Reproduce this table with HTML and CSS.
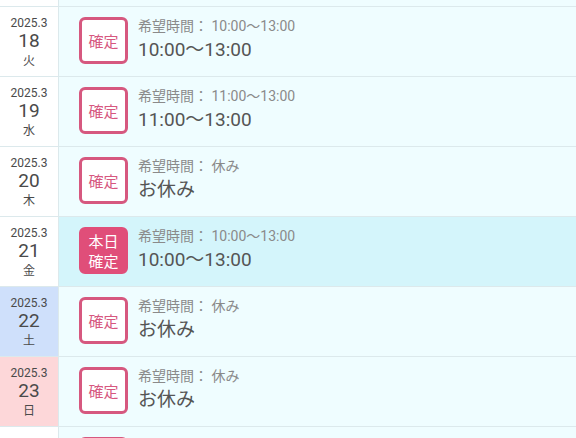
FILE: index.html
```html
<!DOCTYPE html>
<html lang="ja">
<head>
<meta charset="utf-8">
<link rel="stylesheet" href="styles.css">
</head>
<body>
<div class="list">
  <div class="row">
    <div class="date"><div class="ym">2025.3</div><div class="d">17</div><div class="w">月</div></div>
    <div class="main"><div class="badge">確定</div><div class="info"><div class="label">希望時間： 10:00〜13:00</div><div class="time">10:00〜13:00</div></div></div>
  </div>
  <div class="row">
    <div class="date"><div class="ym">2025.3</div><div class="d">18</div><div class="w">火</div></div>
    <div class="main"><div class="badge">確定</div><div class="info"><div class="label">希望時間： 10:00〜13:00</div><div class="time">10:00〜13:00</div></div></div>
  </div>
  <div class="row">
    <div class="date"><div class="ym">2025.3</div><div class="d">19</div><div class="w">水</div></div>
    <div class="main"><div class="badge">確定</div><div class="info"><div class="label">希望時間： 11:00〜13:00</div><div class="time">11:00〜13:00</div></div></div>
  </div>
  <div class="row">
    <div class="date"><div class="ym">2025.3</div><div class="d">20</div><div class="w">木</div></div>
    <div class="main"><div class="badge">確定</div><div class="info"><div class="label">希望時間： 休み</div><div class="time">お休み</div></div></div>
  </div>
  <div class="row today">
    <div class="date"><div class="ym">2025.3</div><div class="d">21</div><div class="w">金</div></div>
    <div class="main"><div class="badge filled">本日<br>確定</div><div class="info"><div class="label">希望時間： 10:00〜13:00</div><div class="time">10:00〜13:00</div></div></div>
  </div>
  <div class="row sat">
    <div class="date"><div class="ym">2025.3</div><div class="d">22</div><div class="w">土</div></div>
    <div class="main"><div class="badge">確定</div><div class="info"><div class="label">希望時間： 休み</div><div class="time">お休み</div></div></div>
  </div>
  <div class="row sun">
    <div class="date"><div class="ym">2025.3</div><div class="d">23</div><div class="w">日</div></div>
    <div class="main"><div class="badge">確定</div><div class="info"><div class="label">希望時間： 休み</div><div class="time">お休み</div></div></div>
  </div>
  <div class="row">
    <div class="date"><div class="ym">2025.3</div><div class="d">24</div><div class="w">月</div></div>
    <div class="main"><div class="badge">確定</div><div class="info"><div class="label">希望時間： 10:00〜13:00</div><div class="time">10:00〜13:00</div></div></div>
  </div>
</div>
</body>
</html>
```
FILE: styles.css
```css
html, body {
  margin: 0;
  padding: 0;
  background: #ffffff;
  font-family: Roboto, "Noto Sans CJK JP", sans-serif;
  overflow: hidden;
}
.list {
  margin-top: -64px;
}
.row {
  display: flex;
  height: 69px;
  border-top: 1px solid #dce9ec;
}
.date {
  width: 59px;
  flex: none;
  border-right: 1px solid #dce9ec;
  background: #ffffff;
  color: #4a4a4a;
  display: flex;
  flex-direction: column;
  align-items: center;
  justify-content: center;
  padding-top: 1px;
  box-sizing: border-box;
}
.sat .date { background: #cfe0fb; }
.sun .date { background: #fdd7d9; }
.ym {
  font-size: 12px;
  line-height: 14px;
}
.d {
  font-size: 19px;
  line-height: 22px;
}
.w {
  font-size: 12px;
  line-height: 16px;
  font-family: "Noto Sans CJK JP", sans-serif;
}
.main {
  flex: 1;
  background: #effdff;
  display: flex;
  align-items: center;
  padding-left: 20px;
}
.today .main { background: #d4f5fb; }
.badge {
  width: 49px;
  height: 47px;
  margin-top: -2px;
  box-sizing: border-box;
  border: 3px solid #d6587f;
  border-radius: 6px;
  background: #ffffff;
  color: #d6587f;
  font-family: "Noto Sans CJK JP", sans-serif;
  font-size: 15px;
  display: flex;
  align-items: center;
  justify-content: center;
  text-align: center;
  flex: none;
}
.badge.filled {
  background: #e04e79;
  border-color: #e04e79;
  color: #ffffff;
  line-height: 20px;
}
.info {
  margin-left: 10px;
  margin-top: -4px;
}
.label {
  font-size: 14px;
  line-height: 20px;
  color: #8a8a8a;
}
.time {
  font-size: 19px;
  line-height: 27px;
  color: #555;
}
```
